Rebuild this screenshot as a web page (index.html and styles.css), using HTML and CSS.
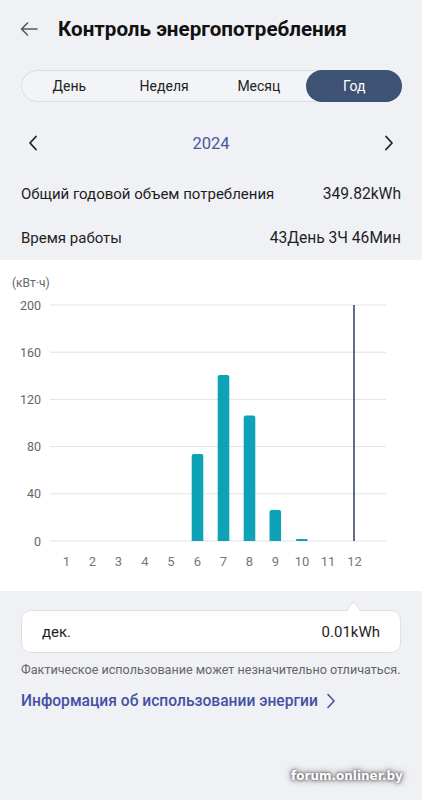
FILE: index.html
```html
<!DOCTYPE html>
<html lang="ru">
<head>
  <meta charset="UTF-8" />
  <meta name="viewport" content="width=device-width, initial-scale=1.0"/>
  <title>Контроль энергопотребления</title>
  <link rel="stylesheet" href="styles.css">
</head>
<body>
  <header class="topbar">
    <svg class="back" width="18" height="14" viewBox="0 0 18 14">
      <path d="M17 7H1.5M7.5 1L1.5 7l6 6" fill="none" stroke="#555a66" stroke-width="1.6" stroke-linecap="round" stroke-linejoin="round"/>
    </svg>
    <h1>Контроль энергопотребления</h1>
  </header>

  <nav class="tabs">
    <span class="tab">День</span>
    <span class="tab">Неделя</span>
    <span class="tab">Месяц</span>
    <span class="tab active">Год</span>
  </nav>

  <section class="period">
    <svg width="10" height="16" viewBox="0 0 10 16">
      <path d="M8 1.5L2 8l6 6.5" fill="none" stroke="#222" stroke-width="1.8" stroke-linecap="round" stroke-linejoin="round"/>
    </svg>
    <span class="year">2024</span>
    <svg width="10" height="16" viewBox="0 0 10 16">
      <path d="M2 1.5L8 8l-6 6.5" fill="none" stroke="#222" stroke-width="1.8" stroke-linecap="round" stroke-linejoin="round"/>
    </svg>
  </section>

  <section class="stats">
    <div class="stat-row first">
      <span>Общий годовой объем потребления</span>
      <span class="value">349.82kWh</span>
    </div>
    <div class="stat-row">
      <span>Время работы</span>
      <span class="value">43День 3Ч 46Мин</span>
    </div>
  </section>

  <section class="chart">
    <svg width="422" height="331" viewBox="0 0 422 331">
      <g class="grid">
        <line x1="50" x2="386" y1="45" y2="45"/>
        <line x1="50" x2="386" y1="92.2" y2="92.2"/>
        <line x1="50" x2="386" y1="139.4" y2="139.4"/>
        <line x1="50" x2="386" y1="186.6" y2="186.6"/>
        <line x1="50" x2="386" y1="233.8" y2="233.8"/>
        <line x1="50" x2="386" y1="281" y2="281"/>
      </g>
      <text class="unit" x="12" y="27">(кВт·ч)</text>
      <g class="ylabels">
        <text x="41" y="49.5">200</text>
        <text x="41" y="96.7">160</text>
        <text x="41" y="143.9">120</text>
        <text x="41" y="191.1">80</text>
        <text x="41" y="238.3">40</text>
        <text x="41" y="285.5">0</text>
      </g>
      <g class="bars">
        <path d="M191.7 281V196a2 2 0 0 1 2-2h7.6a2 2 0 0 1 2 2V281z"/>
        <path d="M217.7 281V117a2 2 0 0 1 2-2h7.6a2 2 0 0 1 2 2V281z"/>
        <path d="M243.7 281V157.5a2 2 0 0 1 2-2h7.6a2 2 0 0 1 2 2V281z"/>
        <path d="M269.5 281V252a2 2 0 0 1 2-2h7.6a2 2 0 0 1 2 2V281z"/>
        <path d="M296 281V280a1 1 0 0 1 1-1h9.6a1 1 0 0 1 1 1V281z"/>
      </g>
      <line class="cursor" x1="354" x2="354" y1="45" y2="281"/>
      <g class="xlabels">
        <text x="66.5" y="306">1</text>
        <text x="92.5" y="306">2</text>
        <text x="118.5" y="306">3</text>
        <text x="145" y="306">4</text>
        <text x="171" y="306">5</text>
        <text x="197.5" y="306">6</text>
        <text x="223.5" y="306">7</text>
        <text x="249.5" y="306">8</text>
        <text x="275.5" y="306">9</text>
        <text x="302" y="306">10</text>
        <text x="328" y="306">11</text>
        <text x="354.5" y="306">12</text>
      </g>
    </svg>
  </section>

  <section class="tooltip">
    <div class="tip-card">
      <span>дек.</span>
      <span>0.01kWh</span>
    </div>
  </section>

  <p class="note">Фактическое использование может незначительно отличаться.</p>
  <a class="info-link" href="#">Информация об использовании энергии
    <svg width="10" height="16" viewBox="0 0 10 16">
      <path d="M2 1.5L8 8l-6 6.5" fill="none" stroke="#4450a3" stroke-width="1.6" stroke-linecap="round" stroke-linejoin="round"/>
    </svg>
  </a>

  <div class="watermark">forum.onliner.by</div>
</body>
</html>
```

FILE: styles.css
```css
body {
  font-family: Roboto, "Noto Sans", sans-serif;
  margin: 0;
  padding: 0;
  background-color: #f0f1f5;
  color: #1a1a1a;
  width: 422px;
  height: 800px;
  position: relative;
  overflow: hidden;
}
.topbar {
  height: 58px;
  display: flex;
  align-items: center;
  padding-left: 20px;
  gap: 20px;
}
.topbar h1 {
  margin: 0;
  font-size: 20.6px;
  font-weight: 700;
  color: #111;
}
.tabs {
  margin: 12px 20px 0 21px;
  height: 32px;
  box-sizing: border-box;
  border: 1px solid #dcdde3;
  border-radius: 16px;
  background: #f3f4f7;
  display: grid;
  grid-template-columns: repeat(4, 1fr);
}
.tab {
  display: flex;
  align-items: center;
  justify-content: center;
  font-size: 14px;
  color: #222;
  border-radius: 16px;
}
.tab.active {
  background: #3e5273;
  color: #fff;
  margin: -1px -1px -1px 0;
}
.period {
  margin-top: 21px;
  height: 40px;
  display: flex;
  align-items: center;
  justify-content: space-between;
  padding: 0 28px 0 28px;
}
.year {
  font-size: 16.5px;
  color: #4857a3;
}
.stats {
  padding: 8px 21px 0 21px;
}
.stat-row {
  display: flex;
  justify-content: space-between;
  align-items: center;
  height: 44px;
  font-size: 15px;
  color: #1e1e1e;
}
.stat-row.first {
  height: 45px;
}
.stat-row .value {
  font-size: 15.6px;
}
.chart {
  background: #fff;
  height: 331px;
}
.chart svg {
  display: block;
}
.grid line {
  stroke: #e2e3e7;
  stroke-width: 1;
}
.unit {
  font-size: 12px;
  fill: #666;
}
.ylabels text {
  font-size: 12.5px;
  fill: #666;
  text-anchor: end;
}
.xlabels text {
  font-size: 13px;
  fill: #777;
  text-anchor: middle;
}
.bars path {
  fill: #0ea2b6;
}
.cursor {
  stroke: #3e4a66;
  stroke-width: 1.6;
}
.tooltip {
  margin: 10px 21px 0 21px;
  position: relative;
  padding-top: 9px;
}
.tooltip::before {
  content: "";
  position: absolute;
  left: 327px;
  top: 3px;
  width: 10px;
  height: 10px;
  background: #fff;
  border-left: 1px solid #dfe0e5;
  border-top: 1px solid #dfe0e5;
  transform: rotate(45deg) skew(8deg, 8deg);
  z-index: 1;
}
.tip-card {
  height: 43px;
  box-sizing: border-box;
  background: #fff;
  border: 1px solid #dfe0e5;
  border-radius: 10px;
  display: flex;
  align-items: center;
  justify-content: space-between;
  padding: 0 20px 0 20px;
  font-size: 15px;
  color: #1e1e1e;
}
.note {
  margin: 8px 0 0 21px;
  font-size: 12.6px;
  line-height: 18px;
  color: #666;
  white-space: nowrap;
}
.info-link {
  display: flex;
  align-items: center;
  gap: 8px;
  margin: 11px 21px 0 21px;
  height: 22px;
  font-size: 15.6px;
  font-weight: 500;
  color: #4450a3;
  text-decoration: none;
}
.watermark {
  position: absolute;
  left: 291px;
  top: 769px;
  font-family: "DejaVu Sans", sans-serif;
  font-weight: 700;
  font-size: 12px;
  color: #fff;
  text-shadow: 0 0 3px #555, 0 0 5px #777, 0 0 8px #999;
}
```
